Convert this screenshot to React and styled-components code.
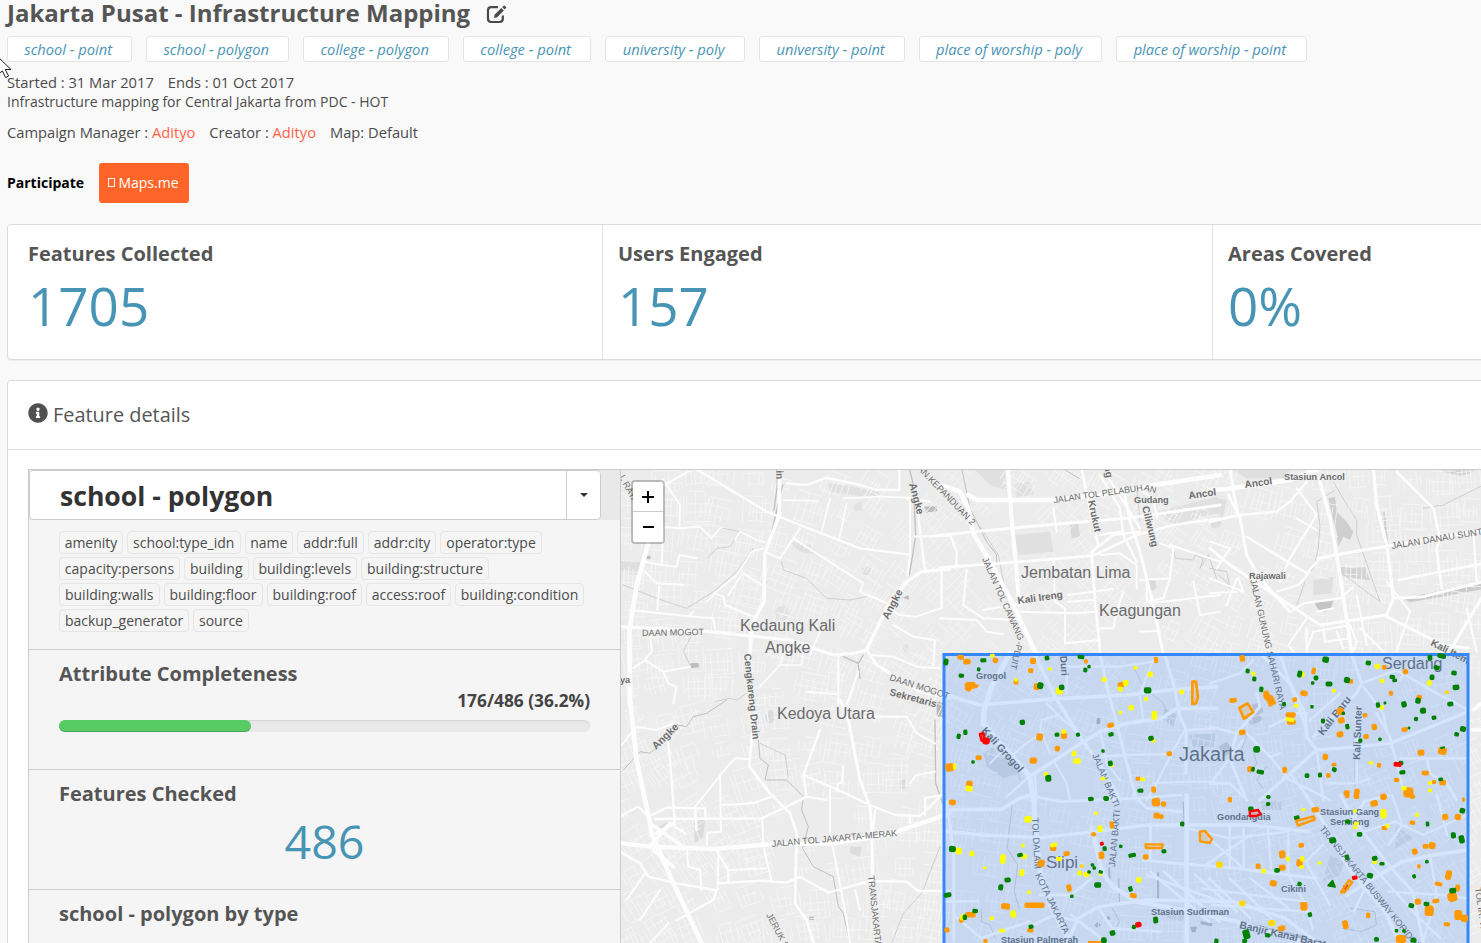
import React from "react";
import styled, { createGlobalStyle, css } from "styled-components";
import { FaInfoCircle } from "react-icons/fa";

const GlobalStyle = createGlobalStyle`
  * { box-sizing: border-box; }
  html, body { margin: 0; padding: 0; background: #f9f9f9; overflow: hidden; }
  body { font-family: "Open Sans", sans-serif; font-size: 14px; color: #4c4c4c; }
`;

const Page = styled.main`
  width: 1481px;
  height: 943px;
  overflow: hidden;
  padding-left: 7px;
  display: flex;
  flex-direction: column;
  position: relative;
`;

const TitleRow = styled.header`
  display: flex;
  align-items: center;
  height: 28px;
  flex: none;
  gap: 16px;
`;

const Title = styled.h1`
  margin: 0 0 2px;
  font-size: 24px;
  line-height: 26px;
  font-weight: 700;
  color: #555;
  white-space: nowrap;
`;

const EditIcon = styled.svg`
  width: 21px;
  height: 20px;
`;

const TypeTags = styled.div`
  display: flex;
  gap: 13.6px;
  margin-top: 8px;
  flex: none;
`;

const TypeTag = styled.span`
  width: ${(p) => p.$width}px;
  height: 26px;
  border: 1px solid #e4e4e4;
  border-radius: 3px;
  background: #fff;
  color: #4a95b5;
  font-style: italic;
  font-size: 14.7px;
  line-height: 25px;
  padding-right: 3px;
  text-align: center;
  white-space: nowrap;
  flex: none;
`;

const InfoLine = styled.p`
  margin: ${(p) => p.$top || 0}px 0 0;
  height: ${(p) => p.$height || 20}px;
  line-height: ${(p) => p.$height || 20}px;
  font-size: ${(p) => p.$size || 14.7}px;
  display: flex;
  gap: 14px;
  white-space: pre;
  flex: none;
`;

const Person = styled.a`
  color: #ff6347;
`;

const Participate = styled.div`
  display: flex;
  align-items: center;
  gap: 15px;
  height: 40px;
  margin-top: 21px;
  line-height: 18px;
  font-weight: 700;
  color: #000;
  flex: none;
`;

const ParticipateLabel = styled.span`
  width: 77px;
  padding-bottom: 1px;
`;

const AppButton = styled.button`
  width: 90px;
  height: 40px;
  border: 0;
  border-radius: 3px;
  background: #ff6528;
  color: #fff;
  font: 500 14px "Open Sans", sans-serif;
  display: flex;
  align-items: center;
  justify-content: center;
  gap: 3px;
  padding: 0 1px 1px 0;
`;

const MissingGlyph = styled.i`
  width: 7px;
  height: 9px;
  border: 1px solid #fff;
`;

const Card = styled.section`
  width: 1840px;
  border: 1px solid #dcdcdc;
  border-radius: 4px;
  background: #fff;
  box-shadow: 0 1px 1px rgba(0, 0, 0, 0.05);
  flex: none;
`;

const StatsCard = styled(Card)`
  display: flex;
  height: 136px;
  margin-top: 21px;
`;

const Stat = styled.div`
  width: ${(p) => (p.$first ? 595 : 610)}px;
  padding: 17px 0 0 ${(p) => (p.$first ? 20 : 15)}px;
  border-right: 1px solid #e2e2e2;
`;

const Heading = styled.h2`
  margin: 0;
  font-size: 20px;
  line-height: 24px;
  font-weight: 700;
  color: #555;
`;

const StatValue = styled.div`
  color: #4794b4;
  font-size: 53px;
  line-height: 60px;
  margin-top: 10px;
`;

const DetailsCard = styled(Card)`
  margin-top: 20px;
  height: 800px;
`;

const CardHeader = styled.div`
  height: 69px;
  border-bottom: 1px solid #dcdcdc;
  padding: 0 0 2px 20px;
  display: flex;
  align-items: center;
  gap: 5px;
  font-size: 19.9px;
  color: #555;
`;

const InfoIcon = styled(FaInfoCircle)`
  width: 20px;
  height: 20px;
  margin-top: -3px;
  color: #505050;
`;

const Workspace = styled.div`
  display: flex;
  margin: 19px 0 0 20px;
  border: 1px solid #ccc;
  width: 1800px;
  height: 700px;
`;

const SidePanel = styled.aside`
  width: 592px;
  background: #f5f5f5;
  border-right: 1px solid #ccc;
  flex: none;
`;

const SelectRow = styled.div`
  height: 50px;
  background: #eae9ea;
`;

const Select = styled.div`
  width: 572px;
  height: 50px;
  border: 1px solid #ccc;
  border-radius: 4px;
  background: #fff;
  display: flex;
`;

const SelectLabel = styled.div`
  flex: 1;
  padding-left: 30px;
  font-size: 26.6px;
  line-height: 50px;
  font-weight: 700;
  color: #333;
`;

const SelectArrow = styled.div`
  width: 34px;
  border-left: 1px solid #ccc;
  display: flex;
  align-items: center;
  justify-content: center;
  &::after {
    content: "";
    border: 4px solid transparent;
    border-top-color: #333;
    border-bottom: 0;
  }
`;

const AttributeBlock = styled.div`
  height: 130px;
  padding: 11px 30px 0;
  border-bottom: 1px solid #ccc;
  display: flex;
  flex-direction: column;
  gap: 3px;
`;

const AttributeRow = styled.div`
  display: flex;
  gap: 4px;
  height: 23px;
`;

const Attribute = styled.span`
  width: ${(p) => p.$width}px;
  height: 23px;
  border: 1px solid #e6e6e6;
  border-radius: 4px;
  line-height: 21px;
  text-align: center;
  white-space: nowrap;
  font-size: 14px;
  color: #4c4c4c;
`;

const PanelSection = styled.div`
  height: 120px;
  padding: 12px 30px 0;
  border-bottom: 1px solid #ccc;
`;

const Ratio = styled.div`
  text-align: right;
  font-size: 17.3px;
  line-height: 20px;
  font-weight: 700;
  color: #444;
  margin-top: 5px;
`;

const Track = styled.div`
  height: 12px;
  margin-top: 9px;
  border-radius: 6px;
  background: #e9e9e9;
  box-shadow: inset 0 1px 2px rgba(0, 0, 0, 0.1);
`;

const Fill = styled.div`
  width: 36.2%;
  height: 12px;
  border-radius: 6px;
  background: #57cb64;
  box-shadow: inset 0 -1px 0 rgba(0, 0, 0, 0.18);
`;

const CheckedValue = styled.div`
  color: #4794b4;
  font-size: 46.5px;
  line-height: 60px;
  text-align: center;
  margin-top: 5px;
`;

const MapPane = styled.div`
  position: relative;
  width: 860px;
  height: 473px;
  overflow: hidden;
  flex: none;
`;

const MapDrawing = styled.svg`
  display: block;
  width: 860px;
  height: 473px;
  font-family: "Liberation Sans", Arial, sans-serif;
`;

const ZoomControl = styled.div`
  position: absolute;
  left: 10px;
  top: 10px;
  width: 34px;
  height: 64px;
  border: 2px solid rgba(0, 0, 0, 0.22);
  border-radius: 4px;
  background: #fff;
  background-clip: padding-box;
`;

const ZoomButton = styled.div`
  height: 30px;
  display: flex;
  align-items: center;
  justify-content: center;
  ${(p) => p.$divided && css`border-bottom: 1px solid #ccc;`}
`;

const Cursor = styled.svg`
  position: absolute;
  left: 0;
  top: 56px;
  width: 12px;
  height: 24px;
`;

const typeTags = [
  ["school - point", 125.4], ["school - polygon", 143.4], ["college - polygon", 146.4], ["college - point", 128.4],
  ["university - poly", 140.4], ["university - point", 146.4], ["place of worship - poly", 183.4], ["place of worship - point", 191],
];

const attributes = [
  [["amenity", 64], ["school:type_idn", 113.5], ["name", 48.5], ["addr:full", 67], ["addr:city", 68], ["operator:type", 102]],
  [["capacity:persons", 121], ["building", 64.5], ["building:levels", 104.5], ["building:structure", 128]],
  [["building:walls", 100.5], ["building:floor", 99], ["building:roof", 95.5], ["access:roof", 85], ["building:condition", 129]],
  [["backup_generator", 130], ["source", 56]],
];

/* ---------- map data: each tile has its own local units ---------- */

const tiles = {
  west: "translate(620 465) scale(.33333)",
  southwest: "translate(620 700) scale(.33333)",
  north: "translate(940 465) scale(.33333)",
  northeast: "translate(1210 465) scale(.33333)",
  centre: "translate(940 650) scale(.33333)",
  east: "translate(1210 650) scale(.33333)",
  south: "translate(940 795) scale(.34503 .33333)",
};

const roads = {
  west: [
    [10, "M478 10L478 150L435 265L432 410L395 480L388 610"],
    [13, "M85 235L50 360L28 500L30 720"],
    [8, "M-5 485L245 498L510 525L640 570L700 565L740 555L770 600L900 680L990 700"],
    [9, "M740 555L800 430L860 350L905 320L990 312"],
    [6, "M225 10L440 140L540 180L720 250L865 268"],
    [6, "M500 55L560 60L620 38L720 60L770 75L838 75L838 10"],
    [5, "M870 100L870 270L862 330"], [4, "M490 105L595 108M670 100L780 95L865 98M630 100L605 200M680 115L658 220"],
    [5, "M440 262L480 280L540 190M520 220L730 355L720 380L800 415"],
    [5, "M205 20L60 100M60 100L130 45L180 120L178 190L240 185M178 190L130 185L125 300M75 290L125 300L170 305L178 270L230 280"],
    [4, "M240 185L275 220L300 190M345 225L360 200L410 225L435 232M430 250L395 260L350 330L290 380L260 410"],
    [5, "M75 320L110 355L190 360M118 365L112 435M30 435L220 455L280 460L285 490M220 440L205 455"],
    [5, "M285 385L310 395L315 420L400 455M370 325L425 360M365 330L325 390"],
    [5, "M75 585L40 610M75 585L130 620L210 605M130 620L145 655L170 665L160 715M90 500L95 560L75 585"],
    [6, "M740 550L800 430M890 110L915 320M885 215L990 212M860 100L930 110M965 320L965 430"],
    [5, "M805 430L840 450L890 455L960 430M820 480L880 515L945 525L940 600M655 570L655 720M755 570L820 575L890 605L960 610M560 680L650 688M715 620L680 720"],
    [4, "M490 560L480 600L415 670M600 500L570 570M480 600L545 600L550 555"],
  ],
  southwest: [
    [13, "M30 0L50 180L88 360L95 400L160 550L245 730"],
    [12, "M0 430L90 440L280 447L460 432L640 430L800 405L990 340"],
    [7, "M400 60L388 200L450 280L510 340L530 400L525 610L560 660L580 730"],
    [8, "M660 0L685 60L720 240L750 320L755 390L758 530"],
    [6, "M550 225L650 268L750 315L825 345L900 348L960 290"],
    [6, "M105 357L425 355L500 320L560 290L550 225L600 90"],
    [6, "M95 345L140 323L255 325L257 355M140 90L150 180L160 310L165 380L195 400M225 325L230 390"],
    [5, "M300 225L345 175L385 177M302 225L225 320M300 225L303 395L262 398L260 435M305 315L400 310L460 288M427 355L430 435L455 545"],
    [5, "M630 270L630 400L650 500L680 660L690 730M560 290L620 300M670 200L665 250"],
    [6, "M295 550L420 542L500 548L540 530L625 578L750 543L860 545L895 573L990 573"],
    [6, "M0 455L60 490L85 530L170 550L285 570M290 450L300 470L325 510L325 548M290 570L280 600L170 660"],
    [5, "M200 445L205 500L240 510L245 570M325 510L440 505M75 520L20 600M120 570L60 660M145 670L90 730M295 450L293 570"],
    [5, "M650 270L655 250L670 245M705 570L720 630M870 345L870 370M0 350L55 320L85 350M0 140L50 80L110 90L160 70"],
    [5, "M720 50L860 50L890 100L945 130M760 390L765 330M870 250L890 225L945 215M915 345L915 295L965 285"],
    [10, "M90 370L190 440M90 440L150 370M100 450L160 500M110 400L160 370"],
  ],
  north: [
    [13, "M-10 55L60 80L85 130L100 205L150 290L215 410L290 570"],
    [11, "M203 10L218 200L228 300L238 420"],
    [13, "M85 90L110 105L340 105L480 90L630 62L840 30"],
    [8, "M-10 212L100 200L380 175M380 175L560 160L700 140L840 120"],
    [7, "M0 308L220 292L460 272L590 210L700 180L840 160"],
    [8, "M550 70L570 170L600 260L640 420L670 570"],
    [7, "M425 10L440 90L475 240L455 265L465 400L480 560"],
    [6, "M480 30L540 130L550 210L590 290M500 30L600 190M455 260L520 210L600 200M480 210L545 200"],
    [5, "M30 210L50 260L48 310M80 315L70 420L130 460L230 465M130 435L270 410M340 285L345 410L375 430L375 535L480 525"],
    [5, "M385 390L520 372M385 410L460 405M240 440L400 445L470 440M600 345L690 340L700 250L660 235M630 415L840 390"],
    [5, "M480 490L520 490L530 440L550 380M600 500L650 498M760 350L780 450L840 440M690 240L840 290M340 130L350 200"],
    [5, "M0 460L110 465L140 500L190 508M590 70L640 100L650 160M480 270L540 265L590 300L590 370M620 340L620 410L670 400L690 340"],
  ],
  northeast: [
    [13, "M0 75L50 72L240 45L330 10"],
    [10, "M330 50L360 160L385 300L405 430L425 560"],
    [9, "M490 10L500 120L530 240L550 395"],
    [8, "M325 280L430 260L550 240L820 195"],
    [8, "M55 90L90 160L110 270L150 340L240 440M60 10L70 80L85 150L0 170"],
    [8, "M0 250L60 300L150 360L240 420L330 480L530 450L550 400L640 395L820 350"],
    [8, "M530 455L700 540L775 550M725 550L820 390"],
    [7, "M560 20L670 130L690 220L680 250L695 370M565 345L820 295"],
    [6, "M210 350L240 280L320 150L260 70M90 150L200 140L240 110L290 50M110 215L290 325L330 280"],
    [5, "M260 160L320 195M200 380L265 360L300 320M245 440L280 415L390 400L430 365M290 460L235 540L250 560"],
    [5, "M290 555L310 500L420 480L440 530L430 560M320 440L370 430M440 390L460 490L470 540M530 350L600 440L560 560"],
    [5, "M790 200L800 350M0 230L60 250L20 310M0 340L100 380L85 340M80 340L50 420M0 385L80 380"],
    [5, "M290 560L290 490M340 490L345 530L420 520M380 500L400 550M450 490L520 560M770 430L800 560"],
  ],
  centre: [
    [10, "M10 132L120 165L320 148L560 135L690 120L830 110"],
    [10, "M285 15L345 140L420 260L490 360L540 450"],
    [15, "M210 10L155 110L132 180L130 220L180 280L270 380L280 450"],
    [10, "M265 382L400 295L480 245L560 220L665 205L710 175L830 175"],
    [8, "M480 15L505 125L530 220L555 320L590 450"],
    [8, "M675 15L705 120L720 200L738 240L738 370"],
    [6, "M738 235L700 300L650 400L620 450M738 240L830 235M480 320L560 315L690 312"],
    [6, "M380 15L380 130M360 50L540 50L640 35M320 160L370 210L420 250M270 378L200 440M285 380L290 450"],
    [5, "M600 140L610 210M480 240L500 340L540 390M600 130L640 30M300 250L305 210L355 195M305 250L330 310"],
    [5, "M215 320L245 290L310 245M150 340L180 310M340 330L380 400L390 450M640 400L740 395L825 395"],
  ],
  east: [
    [9, "M155 15L240 100L285 190L290 260L320 300"],
    [9, "M150 450L230 380L320 300L420 292L540 280L640 240L775 185"],
    [8, "M425 15L455 100L440 130L400 165L310 260"],
    [8, "M210 15L290 240M80 245L60 330L110 450M0 230L80 250L150 170L140 130"],
    [7, "M440 180L440 400M500 190L540 260L580 420M570 325L775 325M650 325L660 370L710 400L740 450"],
    [7, "M455 100L560 60L680 130L775 180M0 400L60 400L110 450M180 230L260 190L290 190"],
    [6, "M110 250L180 320L210 310M180 320L230 380M240 370L300 450M220 380L360 450M100 270L10 390"],
    [6, "M0 100L90 70L130 30M300 210L390 130M320 300L340 450M350 400L440 400L480 385M460 110L520 190L530 240M620 15L570 90"],
    [9, "M790 180L815 160M785 240L815 240"],
  ],
  south: [
    [10, "M10 45L180 42L230 10L275 0"],
    [14, "M272 0L275 90L290 230L320 330L375 440"],
    [9, "M10 108L120 120L290 128L450 110L600 90L900 90L1070 110"],
    [12, "M715 0L715 440"],
    [12, "M440 100L470 230L500 275L570 320L730 350L860 380L1050 440"],
    [9, "M370 440L400 370L460 335L600 315L850 320L1000 370L1090 440"],
    [8, "M590 195L680 205L860 220L1010 240L1090 250"],
    [10, "M1060 0L1110 80L1190 230L1290 350L1330 440"],
    [10, "M1180 300L1240 260L1340 200L1430 180L1528 165"],
    [8, "M1160 0L1210 90L1300 210L1370 290L1400 440M1300 0L1230 20L1200 70"],
    [7, "M20 20L40 180L40 440M10 320L110 318M40 360L120 430L200 400L260 380"],
    [7, "M560 0L600 40L700 50M610 90L610 200M610 230L780 380M650 230L810 380M600 240L840 330M290 300L380 300L440 250"],
    [6, "M780 130L880 220M900 120L770 210M840 90L840 220M720 100L840 130L1010 110M740 240L860 350M780 250L900 370M840 250L960 370M900 250L1010 340M760 280L1060 320M790 330L1070 350"],
    [6, "M1010 100L1010 240L1060 330L1080 400M880 100L880 220M950 100L960 220M1110 150L1060 200L1130 330M1200 120L1320 80L1400 120L1528 60M1240 260L1200 350"],
    [7, "M250 0L350 20L560 10L700 0M460 340L500 400L640 410M380 360L480 440M270 390L330 360L400 380"],
    [6, "M1250 210L1380 360L1450 430M1420 180L1440 300L1400 440M1300 290L1460 300L1528 310M1310 0L1340 90L1300 150M1440 0L1470 120"],
  ],
};

const rivers = {
  west: [[4, "M470 10L472 60L462 135M488 60L440 265M438 350L425 430L400 465M868 10L880 60L887 210L878 270L868 330"],
    [2, "M485 290L490 315L560 340L620 400L690 405L740 395M400 250L350 320L280 380L200 430L110 400L10 360M262 280L290 250L330 245L360 200L310 190M215 510L190 560L210 600M285 710L330 700L350 705L380 685"],
    [4, "M670 575L715 595L730 570M715 600L720 640"]],
  southwest: [[3, "M320 0L260 40L220 50L200 80L170 75L155 105L90 160L60 155L10 210M415 120L420 175L445 195L435 240L500 240L550 290L545 330L565 380L548 445L580 500L640 530L655 620L670 640L690 730"],
    [2, "M420 130L495 165L505 230M960 440L905 580L850 640L815 730"], [4, "M945 60L947 250L968 310"]],
  north: [[3, "M65 10L90 130L140 230L170 270L170 290M225 420L285 565M375 15L418 40"],
    [2, "M120 185L175 270L200 400M700 250L705 280L760 285L765 270L790 280L780 310L805 270L830 340M590 70L600 170"]],
  northeast: [[2, "M370 50L405 110L440 165L440 210L510 410M375 75L320 110L330 180L325 250L310 310L280 340M0 310L50 320L60 370L50 350L25 330M390 320L510 410M820 60L700 120L640 130M285 350L260 420"]],
  centre: [[2, "M290 15L345 140L405 235L465 330M580 50L610 110L670 160L695 220M230 350L240 390"]],
  east: [[2, "M100 240L110 260L90 310M130 300L140 340L120 370M170 350L140 390L160 415M435 310L435 410"]],
  south: [[2, "M210 20L195 160L225 210L215 290L230 340M500 340L520 380L500 420M120 340L120 380L145 390L160 430M1165 400L1220 410L1265 390L1260 350L1190 340"],
    [6, "M632 235L632 310M490 220L492 270"], [3, "M518 250L520 320M705 20L708 90"], [9, "M740 350L960 405L1100 440"]],
};

const areas = [
  ["northeast", "#cfcfcf", "M355 100L375 95L380 140L410 170L430 200L420 225L400 215L385 245L380 200L368 160Z"],
  ["northeast", "#d3d3d3", "M390 305L430 310L465 305L480 345L430 340L390 330Z"],
  ["northeast", "#cbcbcb", "M580 400L820 350L820 372L640 405L600 412Z"],
  ["northeast", "#c5c5c5", "M315 413L369 407Q365 440 342 440Q318 435 315 413Z"],
  ["northeast", "#d2d2d2", "M680 10L800 10Q780 32 745 32Q710 25 680 10ZM515 140L525 140L535 235L522 240Z"],
  ["northeast", "#dfdfdf", "M60 10L240 10L225 40L110 40ZM20 100L50 105L40 150L5 145ZM0 160L40 150L30 185L5 190ZM310 345L370 335L365 385L310 390Z"],
  ["north", "#e0e0e0", "M100 10L195 10L200 75L150 60ZM225 55L270 50L280 90L230 95ZM225 210L330 200L340 260L235 270ZM650 140L830 95L840 140L700 180Z"],
  ["north", "#d9d9d9", "M390 180L415 175L420 215L395 220ZM620 345L645 345L650 370L630 380Z"],
  ["west", "#bdbdbd", "M912 125L950 123L952 138L918 143ZM210 595L235 592L237 607L213 609ZM848 398L866 390L867 404ZM78 272L92 272L90 283L78 283Z"],
  ["west", "#e0e0e0", "M625 55L670 60L780 80L770 100L630 80ZM0 285L60 290L58 330L0 322ZM510 230L570 240L600 270L540 260Z"],
  ["west", "#e2e2e2", "M465 445a22 22 0 1 0 44 0a22 22 0 1 0 -44 0M725 310L755 300L750 330L725 330ZM700 120L725 110L725 135L705 140ZM850 550a8 12 0 1 0 16 0a8 12 0 1 0 -16 0"],
  ["southwest", "#dcdcdc", "M220 360L255 360L250 410L225 430ZM110 385L140 365L150 380L125 400ZM840 238L855 238L855 268L840 265ZM435 50a15 20 0 1 0 30 0a15 20 0 1 0 -30 0M690 440L725 440L720 470L690 460Z"],
  ["southwest", "#bbb", "M950 5L970 5L970 50L950 50ZM567 650L582 650L582 660L567 660Z"],
  ["centre", "#d9dbdd", "M130 310L160 290L240 340L235 370L190 385L140 350ZM670 170L710 195L700 230L670 210ZM745 255L825 250L825 290L760 290Z"],
  ["centre", "#b8b8b8", "M470 204L481 204L481 222L470 222Z"],
  ["east", "#cfcfcf", "M105 205L145 190L160 210L125 225ZM125 165L150 155L160 185L140 195ZM25 290L50 275L70 300L45 320Z"],
  ["south", "#b9bcc2", "M725 395L745 395L740 412L730 412ZM755 378L790 385L788 394L755 388ZM447 390L458 382L466 390L456 399ZM478 370L488 363L495 371L486 378Z"],
  ["south", "#dcdcdc", "M1130 180L1170 200L1160 240L1110 260ZM1320 90L1370 130L1320 160ZM930 20L990 20L990 45L935 45ZM650 340L715 350L710 380L660 370Z"],
];

const palette = { o: "#ff9900", g: "#008000", y: "#ffff00", r: "#ff0000", d: "#ffd900" };

/* x y width height */
const markers = {
  centre: {
    o: "62 22 18 12,81 35 20 14,166 31 14 14,279 33 16 16,272 62 14 12,228 96 12 14,290 110 16 18,438 34 10 10,648 30 10 16,543 105 18 16,512 226 18 12,299 261 18 20,372 257 16 18,352 296 14 14,280 332 20 16,116 323 16 12,30 352 26 22,88 402 18 18,688 311 14 12,594 386 12 10,641 419 12 16,648 449 18 8",
    g: "18 36 12 18,64 77 14 10,130 31 16 10,116 58 8 10,321 24 12 12,423 21 18 10,447 50 8 8,436 60 10 12,301 107 16 18,365 112 14 14,623 121 20 16,247 217 14 14,56 259 10 14,76 247 10 14,351 254 12 10,414 254 10 10,513 253 14 10,633 265 14 12,489 303 8 8,511 340 12 14,99 336 8 8,325 385 16 18,601 422 16 10,453 447 14 8,498 445 14 10",
    y: "157 17 12 8,228 90 8 8,330 57 8 8,358 123 20 18,492 89 12 12,586 53 10 8,631 73 14 14,557 99 14 16,541 117 14 12,725 126 12 12,618 147 10 10,574 173 14 14,541 188 8 8,643 196 14 24,371 245 12 10,402 311 12 14,411 333 20 14,318 373 12 10,87 416 20 14,489 386 12 8,608 388 14 8,44 350 8 16,640 272 10 8,516 347 8 6",
    r: "138 273 20 18",
  },
  east: {
    o: "97 25 14 18,311 63 10 18,282 130 20 14,254 149 12 12,69 151 20 12,242 195 28 14,244 216 24 14,97 247 18 14,391 184 20 20,394 211 18 16,390 253 18 16,465 196 12 10,493 231 14 16,468 260 14 12,523 52 12 12,586 65 14 14,543 130 10 12,628 142 14 12,584 239 16 12,346 321 14 16,372 344 12 8,355 376 12 12,507 346 10 12,560 390 14 10,633 308 18 16,697 303 24 20,646 369 20 12,698 398 18 14,672 396 10 10,595 427 28 28,520 440 16 16,440 431 14 28,410 429 16 14,224 360 12 16,119 357 12 16,60 447 10 8,421 94 14 12",
    g: "347 29 18 16,113 63 10 12,133 87 10 12,154 118 10 14,269 72 12 18,318 84 12 12,308 99 8 8,357 102 18 12,411 90 16 16,475 39 14 12,547 81 14 10,554 91 12 8,660 23 12 14,695 18 24 12,680 53 16 12,732 69 14 12,666 82 12 14,738 112 18 14,504 165 10 14,525 159 6 6,582 163 14 16,624 152 14 16,639 182 16 16,721 162 16 12,618 207 10 10,672 203 12 10,759 237 16 14,740 253 12 10,597 234 6 6,222 162 10 10,306 170 8 8,339 213 10 12,412 230 10 14,451 272 10 10,510 268 8 8,140 298 18 18,129 358 8 12,151 366 20 10,291 377 12 12,330 375 10 12,373 359 12 12,573 339 12 10,577 367 16 10,692 388 12 8,175 441 10 8,400 190 8 8,698 293 12 4",
    y: "130 71 10 10,278 73 8 14,372 122 10 8,502 49 14 14,516 93 12 10,658 99 12 14,258 167 12 8,240 209 24 9,516 172 10 12,483 338 10 8,660 399 10 8,660 422 10 8,582 415 14 10",
    d: "711 127 10 8", r: "563 343 22 12",
  },
  south: {
    o: "36 22 18 14,626 22 22 22,648 27 12 14,628 62 16 16,641 65 12 12,840 14 10 14,498 90 10 20,445 118 12 10,328 160 16 14,367 176 16 12,293 205 18 20,468 181 14 20,596 186 14 14,560 302 18 12,274 331 56 14,190 334 24 16,88 359 28 14,62 376 12 12,20 405 12 14,262 406 16 10,132 438 10 10,448 442 36 6,374 279 12 20,922 214 12 14,992 178 16 22,992 218 18 16,1042 204 16 20,1047 151 14 12,966 265 18 16,1055 334 18 24,990 400 20 14,1088 44 20 14,1180 4 10 8,1208 6 12 10,1258 25 20 16,1286 6 16 14,1370 5 12 10,1464 66 16 16,1501 66 16 16,1369 83 14 10,1288 99 14 10,1426 152 18 18,1407 154 14 12,1376 170 14 16,1388 214 8 10,1474 240 16 26,1500 279 12 18,1445 267 20 10,1485 306 26 26,1385 320 16 16,1437 318 18 10,1418 347 24 30,1502 360 20 28,1520 370 18 20,1469 388 16 10,1241 361 10 14,1175 389 14 24,1336 432 28 22,1517 14 6 10",
    g: "437 12 12 10,482 11 12 12,952 6 8 8,951 27 10 10,901 42 14 12,702 87 10 12,524 154 8 8,557 181 20 10,649 169 12 10,36 162 18 16,232 180 14 10,477 161 10 12,442 210 8 8,447 219 8 8,432 231 8 8,466 231 10 8,196 255 16 12,176 277 12 16,22 300 20 12,457 270 18 14,552 282 10 14,382 304 8 8,102 348 14 10,72 367 10 14,264 395 12 10,500 414 14 14,475 436 14 16,562 396 10 10,625 375 12 18,801 438 10 12,888 418 18 26,883 438 12 10,950 421 14 10,1072 359 10 12,1042 267 10 10,977 226 14 12,1034 68 14 10,1138 136 18 14,1182 80 14 10,1216 118 14 12,1180 187 10 14,1260 190 14 12,1281 206 12 8,1246 242 16 14,1413 87 8 12,1514 47 14 14,1488 121 12 16,1512 133 14 22,1411 200 8 8,1374 244 8 10,1486 287 18 14,1410 327 14 10,1366 332 14 12,1323 407 8 8,1345 408 8 8,1265 433 12 12,1372 436 14 12",
    y: "255 73 18 18,452 55 8 8,464 101 12 18,240 152 8 8,330 150 18 10,54 168 16 18,92 176 12 14,130 218 8 6,182 192 14 26,242 184 18 12,345 192 16 10,237 233 12 18,405 234 12 12,424 239 16 12,465 238 8 6,576 255 14 14,258 292 8 8,212 357 14 20,150 370 10 10,180 407 16 8,64 367 8 16,938 228 10 12,1008 192 8 12,1050 192 10 14,1100 204 8 8,1053 44 10 6,1207 86 12 8,1203 97 10 8,1285 56 16 26,1203 48 8 8,1297 93 10 8,1383 60 8 10,1260 201 12 8,1048 216 12 8",
    d: "810 209 18 16,876 325 16 14,962 384 18 16,411 213 8 8",
    r: "575 389 16 14,469 146 9 9,1202 248 14 10,1177 277 14 12",
  },
};

/* tile, outline, colour, filled, stroke width */
const shapes = [
  ["centre", "M75 102L80 97L104 98L106 104L116 106L112 112L98 115L88 124L77 120Z", "o", true, 3],
  ["centre", "M757 95L768 95L772 125L774 142L768 160L757 162Z", "o", false, 8],
  ["centre", "M120 252L130 250L134 270L125 272Z", "r", false, 8],
  ["east", "M160 125L173 122L178 134L188 138L198 160L178 170L172 154L162 144Z", "o", true, 2],
  ["east", "M88 174L112 160L130 186L102 206Z", "o", false, 8],
  ["south", "M753 110L768 108L788 132L782 144L754 139Z", "o", false, 7],
  ["south", "M596 148L646 148L643 159L597 159Z", "o", false, 7],
  ["south", "M1032 78L1083 64L1086 74L1038 92Z", "o", false, 7],
  ["south", "M1162 292L1185 256L1195 262L1172 292Z", "o", false, 7],
  ["south", "M1046 324L1062 336L1050 344Z", "o", true, 5],
  ["south", "M1125 272L1138 257L1145 276Z", "g", true, 5],
  ["south", "M898 49L922 45L929 57L916 63L898 63Z", "r", false, 7],
];

/* text, x, y, size, rotation, bold */
const labels = [
  ["Kedaung Kali", 740, 631, 16, 0], ["Angke", 765, 652.5, 16, 0], ["Kedoya Utara", 777, 718.5, 16, 0],
  ["Jembatan Lima", 1021, 578, 16, 0], ["Keagungan", 1099, 615.5, 16, 0], ["Serdang", 1382, 668.5, 16, 0],
  ["Jakarta", 1179, 760.5, 20, 0], ["Slipi", 1046, 867.5, 17, 0],
  ["Stasiun Ancol", 1284, 479.5, 9.2, 0, 1], ["Gudang", 1134, 502.5, 9.2, 0, 1], ["Rajawali", 1249, 578.5, 9.2, 0, 1],
  ["Grogol", 976, 678.5, 9.2, 0, 1], ["Gondangdia", 1217, 820, 9.2, 0, 1], ["Stasiun Gang", 1320, 814.5, 9.2, 0, 1],
  ["Sentiong", 1330, 824.5, 9.2, 0, 1], ["Cikini", 1281, 892, 9.2, 0, 1], ["Stasiun Sudirman", 1151, 914.5, 9.2, 0, 1],
  ["Stasiun Palmerah", 1001, 942.5, 9.2, 0, 1], ["ya", 620, 683, 9.2, 0, 1],
  ["DAAN MOGOT", 642, 636, 9.1, -1], ["DAAN MOGOT", 889, 680, 9.1, 18], ["Sekretaris", 889, 695, 10, 15, 1],
  ["Angke", 909, 484, 10.5, 75, 1], ["Angke", 888, 620, 10.5, -62, 1], ["Angke", 656, 750, 10.5, -44, 1],
  ["Cengkareng Drain", 744, 654, 10, 84, 1], ["ain", 776, 465, 10, 88, 1], ["L RAYA", 619, 477, 9.1, 62],
  ["AN.KEPANDUAN 2", 917, 469, 9.1, 46], ["JALAN TOL PELABUH", 1054, 503, 8.8, -8], ["AN", 1143.500, 490, 8.8, 16],
  ["Ancol", 1189, 499, 10, -8, 1], ["Ancol", 1245, 488, 10, -8, 1], ["Krukut", 1088, 501, 10, 78, 1],
  ["Ciliwung", 1142, 507, 10, 76, 1], ["Ang", 1103, 459, 10, 80, 1], ["Kali Ireng", 1018, 604, 10, -8, 1],
  ["JALAN TOL CAWANG", 982, 559, 9, 66], ["-PLUIT", 1017, 641, 9, 104],
  ["JALAN DANAU SUNTER", 1392, 549, 9.3, -9], ["JALAN GUNUNG SAHARI RAYA", 1250, 580, 9.1, 77],
  ["Kali Item", 1430, 645, 10, 27, 1], ["Duri", 1060, 656, 10, 86, 1], ["Kali Grogol", 981, 731, 10.5, 48, 1],
  ["JALAN BAKTI", 1092, 755, 9.1, 67], ["JALAN BAKTI", 1115, 867, 9.1, -85],
  ["Kali Baru", 1323, 736, 10.5, -52, 1], ["Kali Sunter", 1360, 760, 10.2, -88, 1],
  ["JALAN TOL JAKARTA-MERAK", 772, 847, 9.1, -5], ["TRANSJAKARTA", 868, 876, 9.1, 84],
  ["JERUK S", 766, 915, 9.1, 62], ["TOL DALAM", 1032, 818, 9.1, 87], ["KOTA JAKARTA", 1035, 875, 9.1, 64],
  ["TRANSJAKARTA BUSWAY KORIDOR", 1319, 829, 9.1, 51], ["Banjir Kanal Barat", 1239, 928, 10.2, 13, 1],
  ["TOL IR. WIYOTO", 1475, 888, 9.1, 82],
];

function buildStreets() {
  let seed = 7;
  const rand = () => {
    seed = (seed * 16807) % 2147483647;
    return seed / 2147483647;
  };
  const out = [];
  for (let gx = 625; gx < 1490; gx += 30) {
    for (let gy = 475; gy < 950; gy += 30) {
      if (rand() < 0.14) continue;
      const x = gx + rand() * 14;
      const y = gy + rand() * 14;
      const angle = Math.sin(gx / 130) * 22 + Math.cos(gy / 90) * 18 + rand() * 14;
      const half = 9 + rand() * 9;
      let d = "";
      for (let i = -half; i < half; i += 3 + rand() * 4.5) {
        const a = -half * (0.2 + rand() * 0.8);
        const b = half * (0.2 + rand() * 0.8);
        d += `M${i.toFixed(1)} ${a.toFixed(1)}V${b.toFixed(1)}`;
      }
      for (let i = -half; i < half; i += 6 + rand() * 8) {
        d += `M${(-half * (0.4 + rand() * 0.6)).toFixed(1)} ${i.toFixed(1)}H${(half * (0.4 + rand() * 0.6)).toFixed(1)}`;
      }
      out.push(<path key={`${gx}-${gy}`} d={d} transform={`translate(${x.toFixed(1)} ${y.toFixed(1)}) rotate(${angle.toFixed(1)})`} />);
    }
  }
  return out;
}

const streets = buildStreets();

function LineSet({ set, stroke, extra = 0 }) {
  return Object.entries(set).map(([tile, lines]) => (
    <g key={tile} transform={tiles[tile]} stroke={stroke} fill="none" strokeLinejoin="round" strokeLinecap="round">
      {lines.map(([w, d], i) => <path key={i} d={d} strokeWidth={w + extra} />)}
    </g>
  ));
}

function Markers() {
  return Object.entries(markers).map(([tile, groups]) => (
    <g key={tile} transform={tiles[tile]}>
      {["o", "y", "d", "g", "r"].map((c) =>
        (groups[c] ? groups[c].split(",") : []).map((item, i) => {
          const [x, y, bw, bh] = item.split(" ").map(Number);
          const w = bw + 2.5;
          const h = bh + 2.5;
          const turn = w > 30 ? 0 : ((x * 7 + y * 3) % 30) - 15;
          return (
            <rect key={c + i} x={x - w / 2} y={y - h / 2} width={w} height={h} rx={Math.min(w, h) * 0.36}
              fill={palette[c]} transform={`rotate(${turn} ${x} ${y})`} />
          );
        })
      )}
    </g>
  ));
}

function CampaignMap() {
  return (
    <MapDrawing viewBox="621 470 860 473">
      <rect x="621" y="470" width="860" height="473" fill="#ececec" />
      {areas.map(([tile, fill, d], i) => <path key={i} d={d} fill={fill} transform={tiles[tile]} />)}
      <g stroke="#f6f6f6" strokeWidth=".8" fill="none">{streets}</g>
      <LineSet set={rivers} stroke="#c0c0c0" />
      <LineSet set={roads} stroke="#fdfdfd" extra={1} />
      <g fill="#6c6c6c" stroke="#f2f2f2" strokeWidth="1.2" strokeOpacity=".6" paintOrder="stroke">
        {labels.map(([text, x, y, size, angle, bold], i) => (
          <text key={i} fontSize={size} fontWeight={bold ? 700 : 400} transform={`translate(${x} ${y}) rotate(${angle})`}>{text}</text>
        ))}
      </g>
      <rect x="944" y="654.5" width="524" height="320" fill="#3388ff" fillOpacity=".2" stroke="#3388ff" strokeWidth="3" />
      <Markers />
      {shapes.map(([tile, d, c, solid, w], i) => (
        <path key={i} d={d} transform={tiles[tile]} fill={palette[c]} fillOpacity={solid ? 1 : 0.2}
          stroke={palette[c]} strokeWidth={w} strokeLinejoin="round" />
      ))}
    </MapDrawing>
  );
}

export default function App() {
  return (
    <>
      <GlobalStyle />
      <Page>
        <TitleRow>
          <Title>Jakarta Pusat - Infrastructure Mapping</Title>
          <EditIcon viewBox="0 0 21 20">
            <path d="M12 3.2H5.2Q2 3.2 2 6.4V14.8Q2 18 5.2 18H13.6Q16.800 18 16.800 14.800V11.500" fill="none" stroke="#4a4a4a" strokeWidth="2.200" />
            <path d="M8 14L8.600 10.700L15.300 4L17.800 6.500L11.200 13.200ZM16.200 3.100L17.600 1.700Q18.200 1.200 18.800 1.700L20 2.900Q20.400 3.500 20 4.100L18.600 5.500Z" fill="#4a4a4a" />
          </EditIcon>
        </TitleRow>
        <TypeTags>
          {typeTags.map(([name, width]) => <TypeTag key={name} $width={width}>{name}</TypeTag>)}
        </TypeTags>
        <InfoLine $top={10}><span>Started : 31 Mar 2017</span><span>Ends : 01 Oct 2017</span></InfoLine>
        <InfoLine $size={14} $height={19}>Infrastructure mapping for Central Jakarta from PDC - HOT</InfoLine>
        <InfoLine $top={11}>
          <span>Campaign Manager : <Person>Adityo</Person></span>
          <span>Creator : <Person>Adityo</Person></span>
          <span>Map: Default</span>
        </InfoLine>
        <Participate>
          <ParticipateLabel>Participate</ParticipateLabel>
          <AppButton><MissingGlyph />Maps.me</AppButton>
        </Participate>
        <StatsCard>
          <Stat $first><Heading>Features Collected</Heading><StatValue>1705</StatValue></Stat>
          <Stat><Heading>Users Engaged</Heading><StatValue>157</StatValue></Stat>
          <Stat><Heading>Areas Covered</Heading><StatValue>0%</StatValue></Stat>
        </StatsCard>
        <DetailsCard>
          <CardHeader><InfoIcon />Feature details</CardHeader>
          <Workspace>
            <SidePanel>
              <SelectRow>
                <Select><SelectLabel>school - polygon</SelectLabel><SelectArrow /></Select>
              </SelectRow>
              <AttributeBlock>
                {attributes.map((row, i) => (
                  <AttributeRow key={i}>
                    {row.map(([name, width]) => <Attribute key={name} $width={width}>{name}</Attribute>)}
                  </AttributeRow>
                ))}
              </AttributeBlock>
              <PanelSection>
                <Heading>Attribute Completeness</Heading>
                <Ratio>176/486 (36.2%)</Ratio>
                <Track><Fill /></Track>
              </PanelSection>
              <PanelSection>
                <Heading>Features Checked</Heading>
                <CheckedValue>486</CheckedValue>
              </PanelSection>
              <PanelSection>
                <Heading>school - polygon by type</Heading>
              </PanelSection>
            </SidePanel>
            <MapPane>
              <CampaignMap />
              <ZoomControl>
                <ZoomButton $divided>
                  <svg width="12" height="12"><path d="M6 0V12M0 6H12" stroke="#000" strokeWidth="2" /></svg>
                </ZoomButton>
                <ZoomButton>
                  <svg width="12" height="12"><path d="M1 6H12" stroke="#000" strokeWidth="2" /></svg>
                </ZoomButton>
              </ZoomControl>
            </MapPane>
          </Workspace>
        </DetailsCard>
        <Cursor viewBox="0 0 12 24">
          <path d="M-3 0L11 13.500H5.200L8.600 20L5.600 21.500L2.400 15L-3 19Z" fill="#fff" stroke="#222" strokeWidth="1" />
        </Cursor>
      </Page>
    </>
  );
}
